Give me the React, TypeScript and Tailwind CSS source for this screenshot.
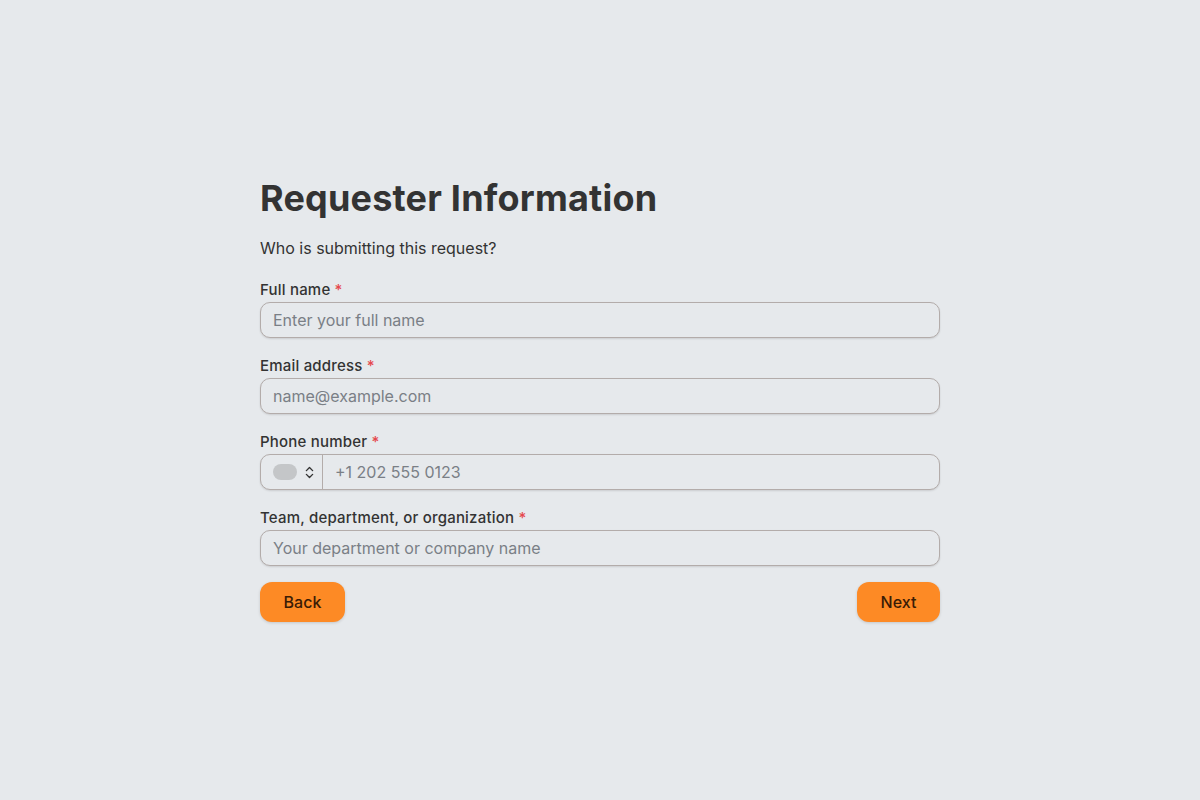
import { ChevronsUpDown } from "lucide-react";

const fields = [
  { label: "Full name", placeholder: "Enter your full name", type: "text" },
  { label: "Email address", placeholder: "name@example.com", type: "email" },
  { label: "Phone number", placeholder: "+1 202 555 0123", type: "tel" },
  {
    label: "Team, department, or organization",
    placeholder: "Your department or company name",
    type: "text",
  },
];

const inputBase =
  "h-9 w-full rounded-[10px] border border-[#b3acaa] bg-[#e6e9ec] text-[16px] text-[#333] placeholder:text-[#7a7f86] shadow-[0_1px_2px_rgba(0,0,0,0.12)] outline-none";

export default function App() {
  return (
    <div
      className="min-h-screen w-full bg-[#e6e9ec] flex items-center justify-center text-[#333]"
      style={{ fontFamily: "Inter, 'Noto Sans', sans-serif" }}
    >
      <form className="w-[680px] flex flex-col pb-[2px]">
        <h1 className="text-[36px] font-bold leading-[44px] tracking-[0.2px] text-[#333]">
          Requester Information
        </h1>
        <p className="mt-[16px] text-[16px] leading-[24px]">
          Who is submitting this request?
        </p>

        <div className="mt-[20px] flex flex-col gap-[18px]">
          {fields.map((f) => (
            <div key={f.label} className="flex flex-col gap-[2px]">
              <label className="text-[15px] leading-[20px] font-medium tracking-[0.2px] text-[#333]">
                {f.label} <span className="text-[#e5484d]">*</span>
              </label>
              {f.type === "tel" ? (
                <div className={inputBase + " flex items-center"}>
                  <div className="flex items-center gap-[5px] pl-[12px] pr-[5px] h-full border-r border-[#b3acaa]">
                    <span className="block h-[16px] w-[24px] rounded-full bg-[#c4c6c8]" />
                    <ChevronsUpDown size={15} strokeWidth={2.2} className="text-[#333]" />
                  </div>
                  <input
                    type="tel"
                    placeholder={f.placeholder}
                    className="h-full flex-1 bg-transparent px-[12px] text-[16px] placeholder:text-[#7a7f86] outline-none"
                  />
                </div>
              ) : (
                <input type={f.type} placeholder={f.placeholder} className={inputBase + " px-[12px]"} />
              )}
            </div>
          ))}
        </div>

        <div className="mt-[16px] flex items-center justify-between">
          <button
            type="button"
            className="h-10 w-[85px] rounded-[12px] bg-[#fd8a25] text-[16px] font-medium text-[#3a1c05] shadow-[0_1px_3px_rgba(0,0,0,0.15)]"
          >
            Back
          </button>
          <button
            type="button"
            className="h-10 w-[83px] rounded-[12px] bg-[#fd8a25] text-[16px] font-medium text-[#3a1c05] shadow-[0_1px_3px_rgba(0,0,0,0.15)]"
          >
            Next
          </button>
        </div>
      </form>
    </div>
  );
}
